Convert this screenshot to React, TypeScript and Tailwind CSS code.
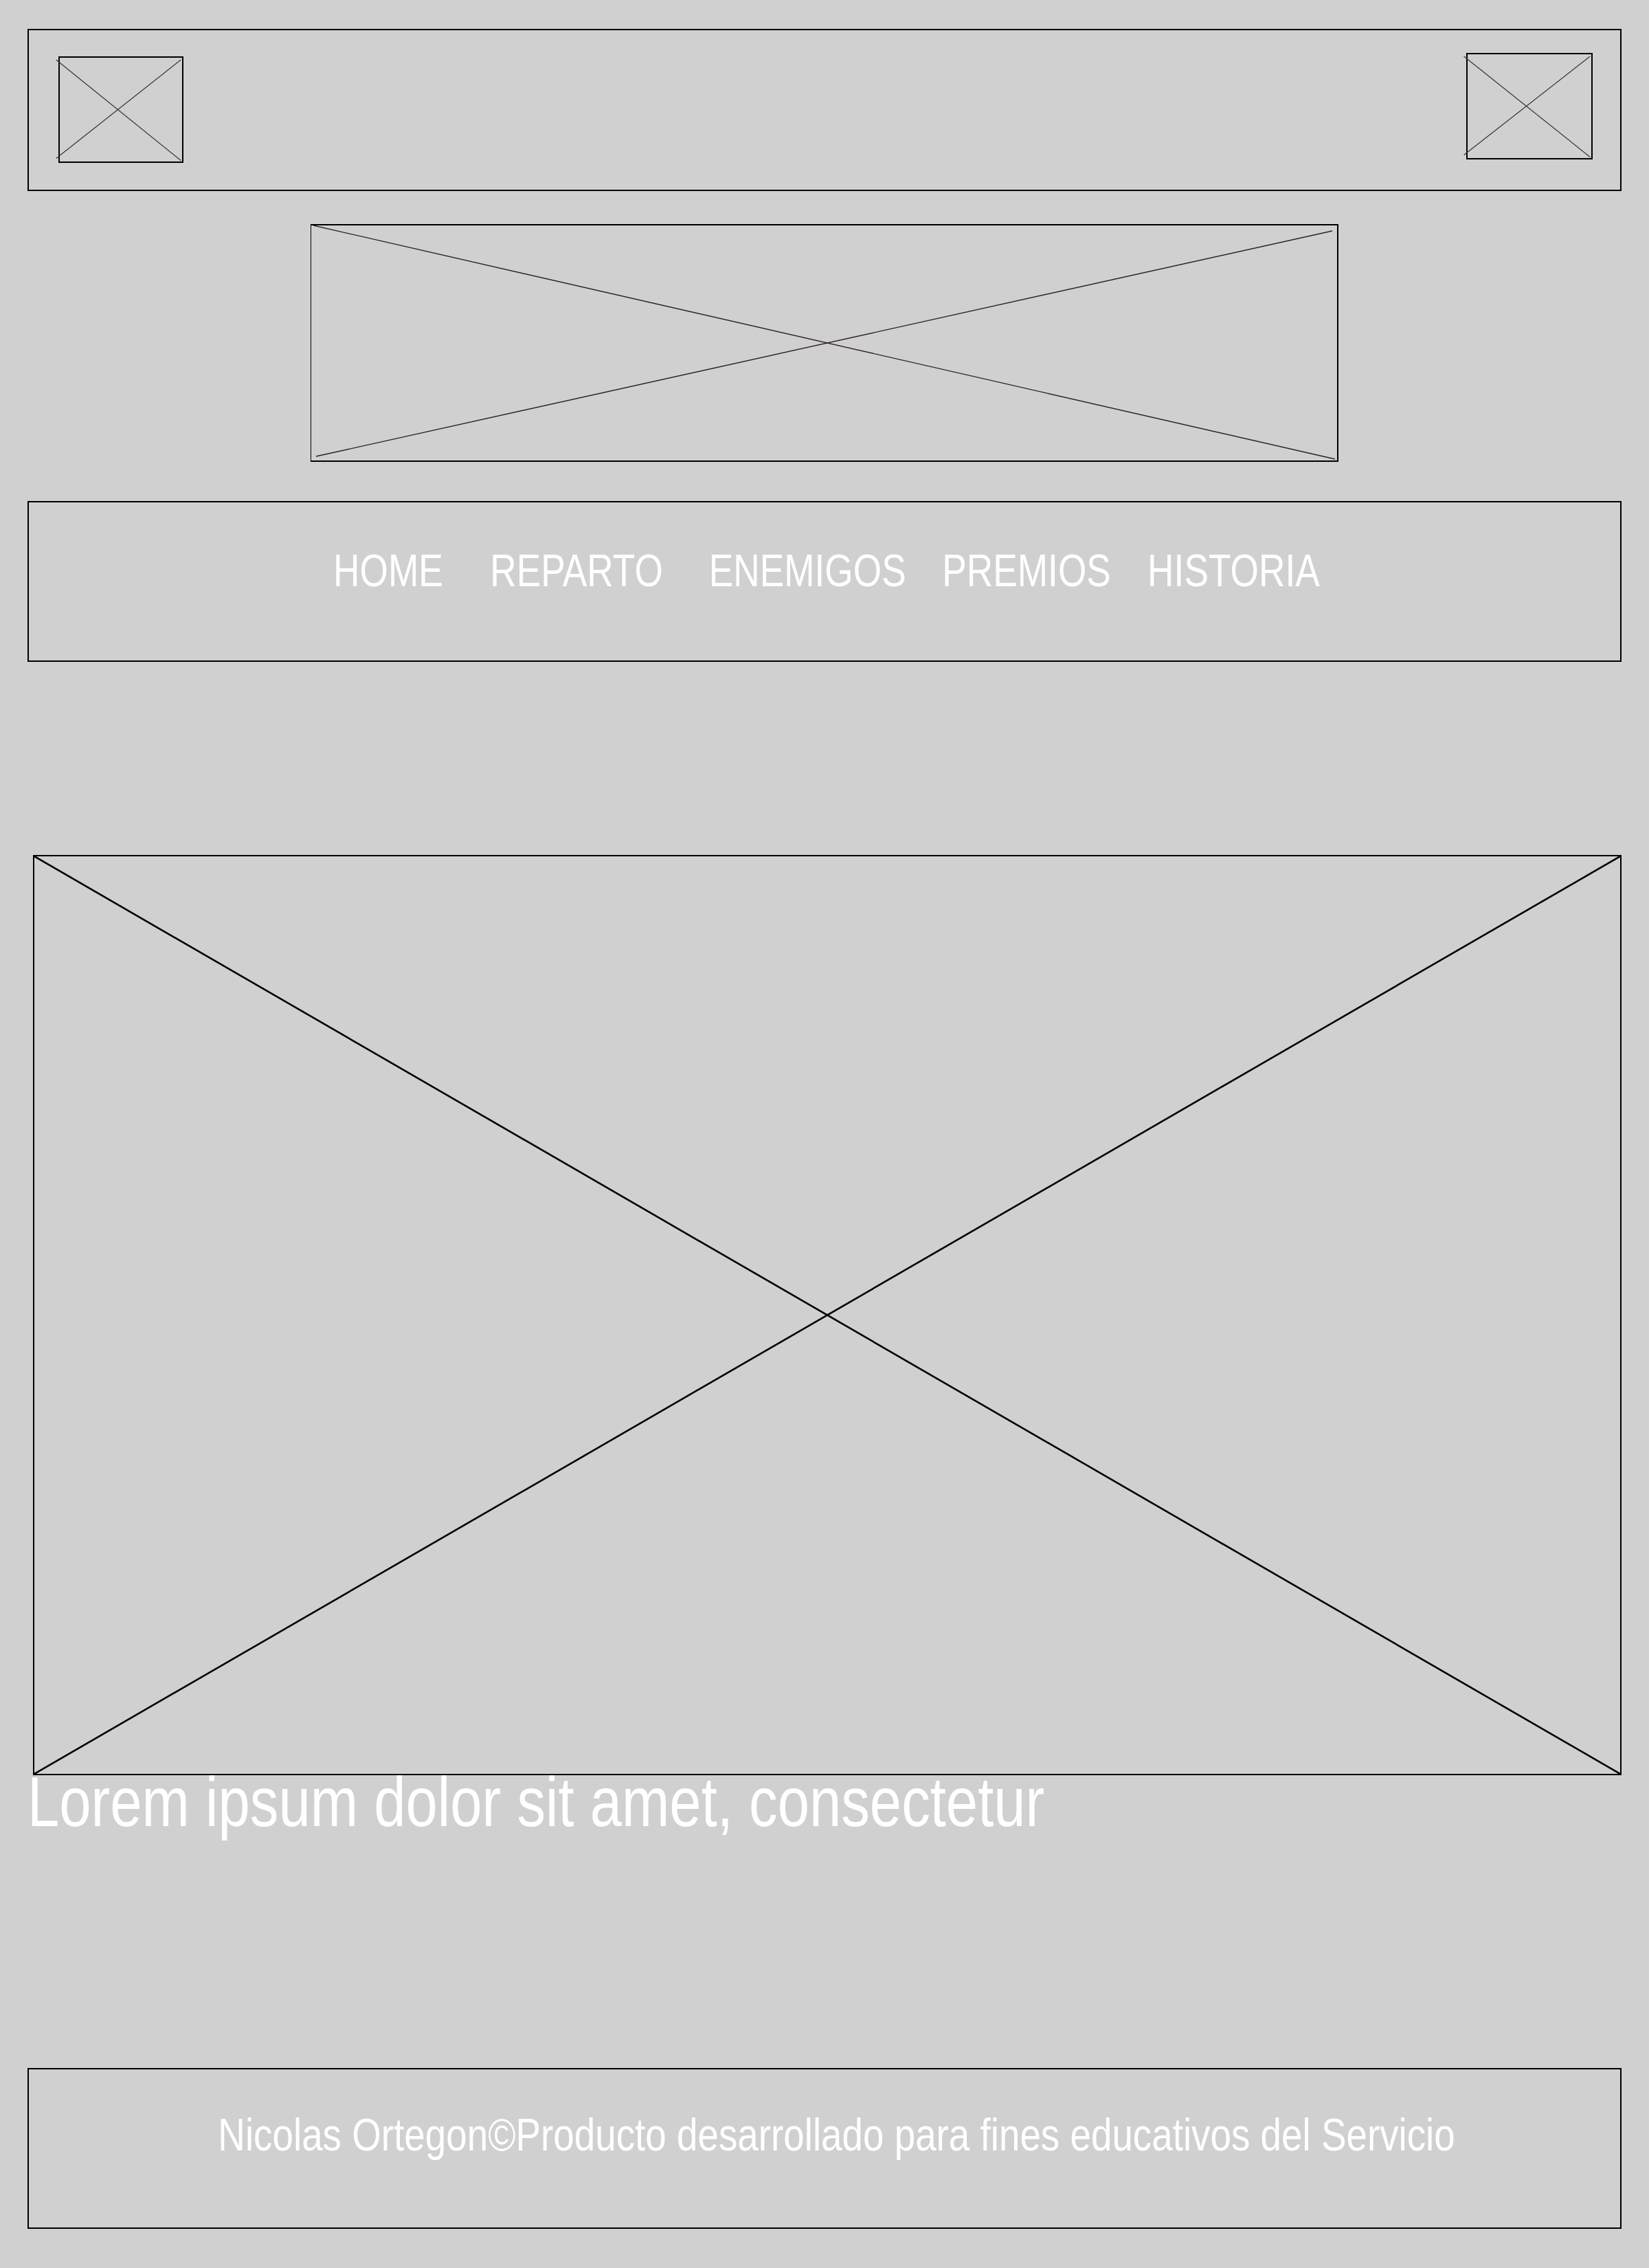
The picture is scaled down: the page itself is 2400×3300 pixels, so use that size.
const sans = { fontFamily: "'Liberation Sans Narrow', 'Arial Narrow', 'Liberation Sans', Arial, sans-serif" };

function Placeholder({ className }: { className: string }) {
  return (
    <div className={`relative ${className}`}>
      <svg className="absolute inset-0 h-full w-full overflow-visible" preserveAspectRatio="none" viewBox="0 0 100 100">
        <line x1="-3" y1="2" x2="99" y2="99" stroke="#333" strokeWidth="1.2" vectorEffect="non-scaling-stroke" />
        <line x1="-3" y1="97" x2="99" y2="2" stroke="#333" strokeWidth="1.2" vectorEffect="non-scaling-stroke" />
      </svg>
    </div>
  );
}

// margins are before the horizontal squeeze
const links = [
  { label: "HOME", ml: "" },
  { label: "REPARTO", ml: "ml-[86px]" },
  { label: "ENEMIGOS", ml: "ml-[84px]" },
  { label: "PREMIOS", ml: "ml-[66px]" },
  { label: "HISTORIA", ml: "ml-[67px]" },
];

export default function App() {
  return (
    <div className="min-h-[3300px] overflow-hidden bg-[#d0d0d0] px-[40px] pt-[42px]" style={sans}>
      {/* header */}
      <header className="flex h-[236px] items-start justify-between border-2 border-black pl-[43px] pr-[40px]">
        <Placeholder className="mt-[38px] h-[155px] w-[182px] border-2 border-black" />
        <Placeholder className="mt-[33px] h-[155px] w-[184px] border-2 border-black" />
      </header>

      {/* banner */}
      <div className="mt-[48px] flex justify-center">
        <div className="relative h-[346px] w-[1496px] border-t-2 border-r-2 border-b-2 border-l border-black">
          <svg className="absolute inset-0 h-full w-full" viewBox="0 0 1493 342" preserveAspectRatio="none">
            <line x1="3" y1="0" x2="1490" y2="340" stroke="#2e2020" strokeWidth="1.4" />
            <line x1="7" y1="336" x2="1486" y2="8" stroke="#2e2020" strokeWidth="1.4" />
          </svg>
        </div>
      </div>

      {/* nav */}
      <nav className="mt-[57px] h-[234px] border-2 border-black">
        <div className="flex justify-center pt-[65px] pl-[6px]">
          <ul className="inline-flex origin-center scale-x-[0.795] text-[67px] leading-none whitespace-nowrap text-white">
            {links.map((l) => (
              <li key={l.label} className={l.ml}>
                {l.label}
              </li>
            ))}
          </ul>
        </div>
      </nav>

      {/* main image */}
      <div className="mt-[281px] pl-[8px]">
        <div className="relative h-[1339px] border-2 border-black">
          <svg className="absolute inset-0 h-full w-full" viewBox="0 0 2308 1335" preserveAspectRatio="none">
            <line x1="0" y1="0" x2="2308" y2="1335" stroke="#000" strokeWidth="2.6" />
            <line x1="0" y1="1335" x2="2308" y2="0" stroke="#000" strokeWidth="2.6" />
          </svg>
        </div>
      </div>
      <p className="text-[102px] leading-[78px] whitespace-nowrap text-white">
        <span className="inline-block origin-left scale-x-[0.816]">Lorem ipsum dolor sit amet, consectetur</span>
      </p>

      {/* footer */}
      <footer className="mt-[348px] flex h-[234px] justify-center border-2 border-black pt-[62px] pl-[36px]">
        <span className="inline-block origin-center scale-x-[0.83] text-[66px] leading-none whitespace-nowrap text-white">
          Nicolas Ortegon©Producto desarrollado para fines educativos del Servicio
        </span>
      </footer>
    </div>
  );
}
